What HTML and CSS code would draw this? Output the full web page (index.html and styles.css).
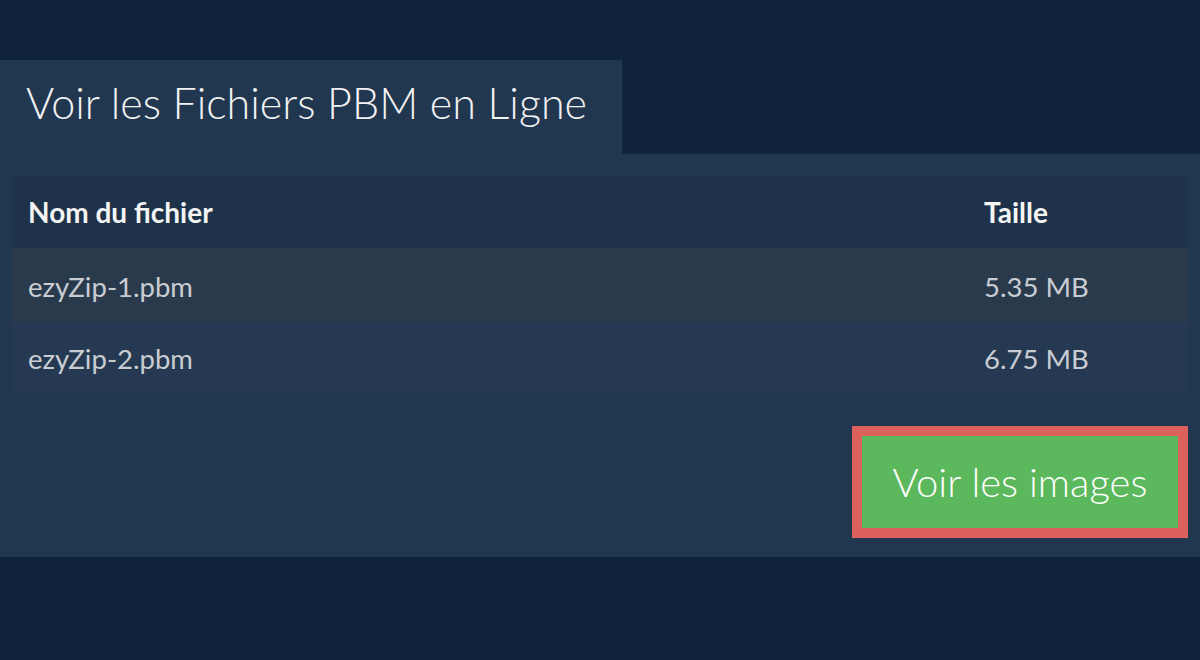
FILE: index.html
```html
<!DOCTYPE html>
<html lang="fr">
<head>
<meta charset="utf-8">
<title>Voir les Fichiers PBM en Ligne</title>
<link rel="stylesheet" href="styles.css">
</head>
<body>
<div class="page">
  <div class="tab"><h1 class="title">Voir les Fichiers PBM en Ligne</h1></div>
  <div class="panel">
    <div class="table">
      <div class="row head">
        <div class="c-name">Nom du fichier</div>
        <div class="c-size">Taille</div>
      </div>
      <div class="row odd">
        <div class="c-name">ezyZip-1.pbm</div>
        <div class="c-size">5.35 MB</div>
      </div>
      <div class="row even">
        <div class="c-name">ezyZip-2.pbm</div>
        <div class="c-size">6.75 MB</div>
      </div>
    </div>
    <div class="actions">
      <div class="btn-frame"><button class="btn">Voir les images</button></div>
    </div>
  </div>
</div>
</body>
</html>
```
FILE: styles.css
```css
html, body {
  margin: 0;
  padding: 0;
  background: #0f233a;
  font-family: Lato, "Noto Sans", sans-serif;
}
.page {
  width: 1200px;
  height: 660px;
  padding-top: 60px;
  box-sizing: border-box;
}
.tab {
  width: 622px;
  height: 94px;
  background: #213750;
  box-sizing: border-box;
  padding-left: 26px;
  display: flex;
  align-items: center;
}
.title {
  margin: 0;
  font-weight: 300;
  font-size: 43px;
  color: #f2f2f2;
  padding-bottom: 9px;
}
.panel {
  background: #213750;
  padding: 21px 12px 19px 12px;
  height: 403px;
  box-sizing: border-box;
}
.table {
  display: flex;
  flex-direction: column;
}
.row {
  display: flex;
  align-items: center;
  padding-left: 16px;
}
.row.head {
  height: 73px;
  background: #1e3349;
  color: #f4f4f4;
  font-weight: 700;
  font-size: 28px;
}
.row.odd,
.row.even {
  font-size: 27.5px;
  color: #c9cdd3;
  padding-top: 2px;
  box-sizing: border-box;
}
.row.odd {
  height: 74px;
  background: #2a3a4d;
}
.row.even {
  height: 71px;
  background: #253a52;
}
.c-name {
  width: 956px;
}
.c-size {
  flex: 1;
}
.actions {
  display: flex;
  justify-content: flex-end;
  margin-top: 33px;
}
.btn-frame {
  border: 10px solid #dc605c;
}
.btn {
  display: block;
  width: 316px;
  height: 92px;
  border: none;
  background: #5cb85c;
  color: #ffffff;
  font-family: Lato, "Noto Sans", sans-serif;
  font-weight: 300;
  font-size: 40px;
  padding: 0 0 1px 0;
  cursor: pointer;
}
```
